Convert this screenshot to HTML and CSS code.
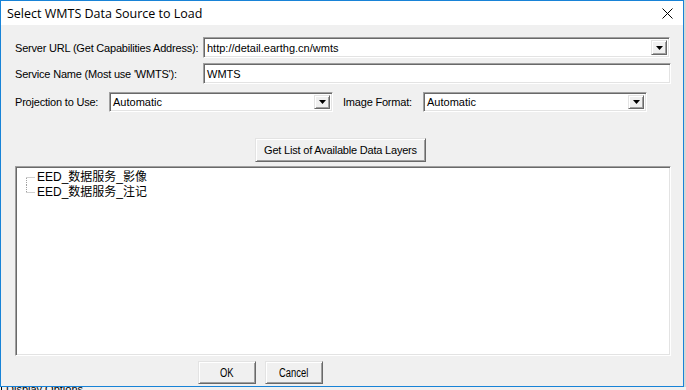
FILE: index.html
```html
<!DOCTYPE html>
<html lang="en">
<head>
  <meta charset="UTF-8">
  <title>Select WMTS Data Source to Load</title>
  <link rel="stylesheet" href="styles.css">
</head>
<body>
  <div class="desk">
    <div class="dialog">
      <div class="titlebar">
        <span class="title">Select WMTS Data Source to Load</span>
        <span class="close">
          <svg width="11" height="11" viewBox="0 0 11 11"><path d="M0.5 0.5 L10.5 10.5 M10.5 0.5 L0.5 10.5" stroke="#000" stroke-width="1" fill="none"/></svg>
        </span>
      </div>

      <div class="content">
        <div class="row row-url">
          <label class="lbl lbl-wide">Server URL (Get Capabilities Address):</label>
          <div class="combo combo-url">
            <span class="value">http://detail.earthg.cn/wmts</span>
            <span class="drop"><svg width="7" height="4" viewBox="0 0 7 4"><path d="M0 0 H7 L3.5 4 Z" fill="#000"/></svg></span>
          </div>
        </div>

        <div class="row row-name">
          <label class="lbl lbl-wide">Service Name (Most use 'WMTS'):</label>
          <div class="field field-name"><span class="value">WMTS</span></div>
        </div>

        <div class="row row-proj">
          <label class="lbl lbl-proj">Projection to Use:</label>
          <div class="combo combo-small">
            <span class="value">Automatic</span>
            <span class="drop"><svg width="7" height="4" viewBox="0 0 7 4"><path d="M0 0 H7 L3.5 4 Z" fill="#000"/></svg></span>
          </div>
          <label class="lbl lbl-fmt">Image Format:</label>
          <div class="combo combo-small">
            <span class="value">Automatic</span>
            <span class="drop"><svg width="7" height="4" viewBox="0 0 7 4"><path d="M0 0 H7 L3.5 4 Z" fill="#000"/></svg></span>
          </div>
        </div>

        <div class="row row-get">
          <button class="btn btn-get">Get List of Available Data Layers</button>
        </div>

        <div class="tree">
          <div class="node">
            <svg class="conn" width="19" height="15" viewBox="0 0 19 15"><path d="M8.5 7.5 H17 M8.5 8 V15" stroke="#a0a0a0" stroke-width="1" stroke-dasharray="1 1" fill="none"/></svg>
            <span class="node-text">EED_数据服务_影像</span>
          </div>
          <div class="node">
            <svg class="conn" width="19" height="15" viewBox="0 0 19 15"><path d="M8.5 0 V7.5 M8.5 7.5 H17" stroke="#a0a0a0" stroke-width="1" stroke-dasharray="1 1" fill="none"/></svg>
            <span class="node-text">EED_数据服务_注记</span>
          </div>
        </div>

        <div class="row row-actions">
          <button class="btn btn-act"><span class="narrow">OK</span></button>
          <button class="btn btn-act"><span class="narrow">Cancel</span></button>
        </div>
      </div>
    </div>
    <div class="side"></div>
  </div>
  <div class="behind"><span class="behind-text">Display Options</span></div>
</body>
</html>
```

FILE: styles.css
```css
body {
  margin: 0;
  width: 686px;
  height: 390px;
  overflow: hidden;
  background-color: #f0f0f0;
  font-family: "Liberation Sans", Arial, sans-serif;
  font-size: 11px;
  color: #000;
}

.desk {
  display: flex;
  height: 387px;
}

.dialog {
  width: 684px;
  height: 387px;
  box-sizing: border-box;
  border: 1px solid #1883d7;
  display: flex;
  flex-direction: column;
  background-color: #f0f0f0;
}

.side {
  width: 2px;
  background-color: #d6d6d6;
}

/* title bar */
.titlebar {
  height: 24px;
  background-color: #fff;
  display: flex;
  align-items: center;
  justify-content: space-between;
  padding: 0 10px 0 6px;
}

.title {
  font-family: "Open Sans", "Noto Sans", sans-serif;
  font-size: 12.5px;
  color: #000;
  padding-top: 1px;
}

.close {
  display: flex;
  margin-top: 1px;
}

/* body */
.content {
  flex: 1;
  display: flex;
  flex-direction: column;
  padding-left: 14px;
}

.row {
  display: flex;
  align-items: center;
}

.row-url {
  margin-top: 12px;
  height: 21px;
}

.row-name {
  margin-top: 5px;
  height: 21px;
}

.row-proj {
  margin-top: 8px;
  height: 20px;
}

.row-get {
  margin-top: 26px;
  height: 24px;
  padding-left: 240px;
}

.row-actions {
  margin-top: 5px;
  height: 23px;
  padding-left: 183px;
  gap: 9px;
}

.lbl {
  letter-spacing: -0.2px;
  white-space: nowrap;
}

.lbl-wide {
  width: 188px;
}

.lbl-proj {
  width: 94px;
}

.lbl-fmt {
  width: 80px;
  margin-left: 10px;
}

/* sunken boxes */
.combo,
.field,
.tree {
  box-sizing: border-box;
  background-color: #fff;
  border-top: 1px solid #a0a0a0;
  border-left: 1px solid #a0a0a0;
  border-bottom: 1px solid #fff;
  border-right: 1px solid #fff;
  box-shadow: inset 1px 1px 0 #696969, inset -1px -1px 0 #e3e3e3;
}

.combo,
.field {
  height: 100%;
  display: flex;
  align-items: center;
  padding: 2px;
}

.combo-url {
  width: 467px;
}

.field-name {
  width: 468px;
}

.combo-small {
  width: 224px;
}

.value {
  flex: 1;
  padding-left: 1px;
  white-space: nowrap;
}

.drop {
  width: 16px;
  height: 100%;
  box-sizing: border-box;
  display: flex;
  align-items: center;
  justify-content: center;
  background-color: #f0f0f0;
  border-top: 1px solid #e3e3e3;
  border-left: 1px solid #e3e3e3;
  border-bottom: 1px solid #696969;
  border-right: 1px solid #696969;
  box-shadow: inset 1px 1px 0 #fff, inset -1px -1px 0 #a0a0a0;
}

/* buttons */
.btn {
  box-sizing: border-box;
  background-color: #f0f0f0;
  font-family: "Liberation Sans", Arial, sans-serif;
  font-size: 11px;
  color: #000;
  padding: 0;
  border-top: 1px solid #e3e3e3;
  border-left: 1px solid #e3e3e3;
  border-bottom: 1px solid #696969;
  border-right: 1px solid #696969;
  box-shadow: inset 1px 1px 0 #fff, inset -1px -1px 0 #a0a0a0;
  cursor: pointer;
}

.btn-get {
  width: 171px;
  height: 24px;
  letter-spacing: -0.2px;
}

.btn-act {
  width: 58px;
  height: 23px;
}

.narrow {
  display: inline-block;
  font-size: 12px;
  transform: scaleX(0.78);
}

/* tree */
.tree {
  width: 656px;
  height: 190px;
  margin-top: 4px;
  padding: 3px 2px 2px 2px;
}

.node {
  display: flex;
  align-items: center;
  height: 15px;
}

.conn {
  display: block;
  flex: none;
}

.node-text {
  font-family: "Liberation Sans", "Noto Sans CJK SC", sans-serif;
  font-size: 12px;
  line-height: 15px;
}

/* window behind the dialog */
.behind {
  height: 3px;
  overflow: hidden;
  border-left: 1px solid #000;
  margin-left: 1px;
  padding-left: 4px;
}

.behind-text {
  display: block;
  font-size: 11px;
  line-height: 5px;
  white-space: nowrap;
  color: #000;
}
```
